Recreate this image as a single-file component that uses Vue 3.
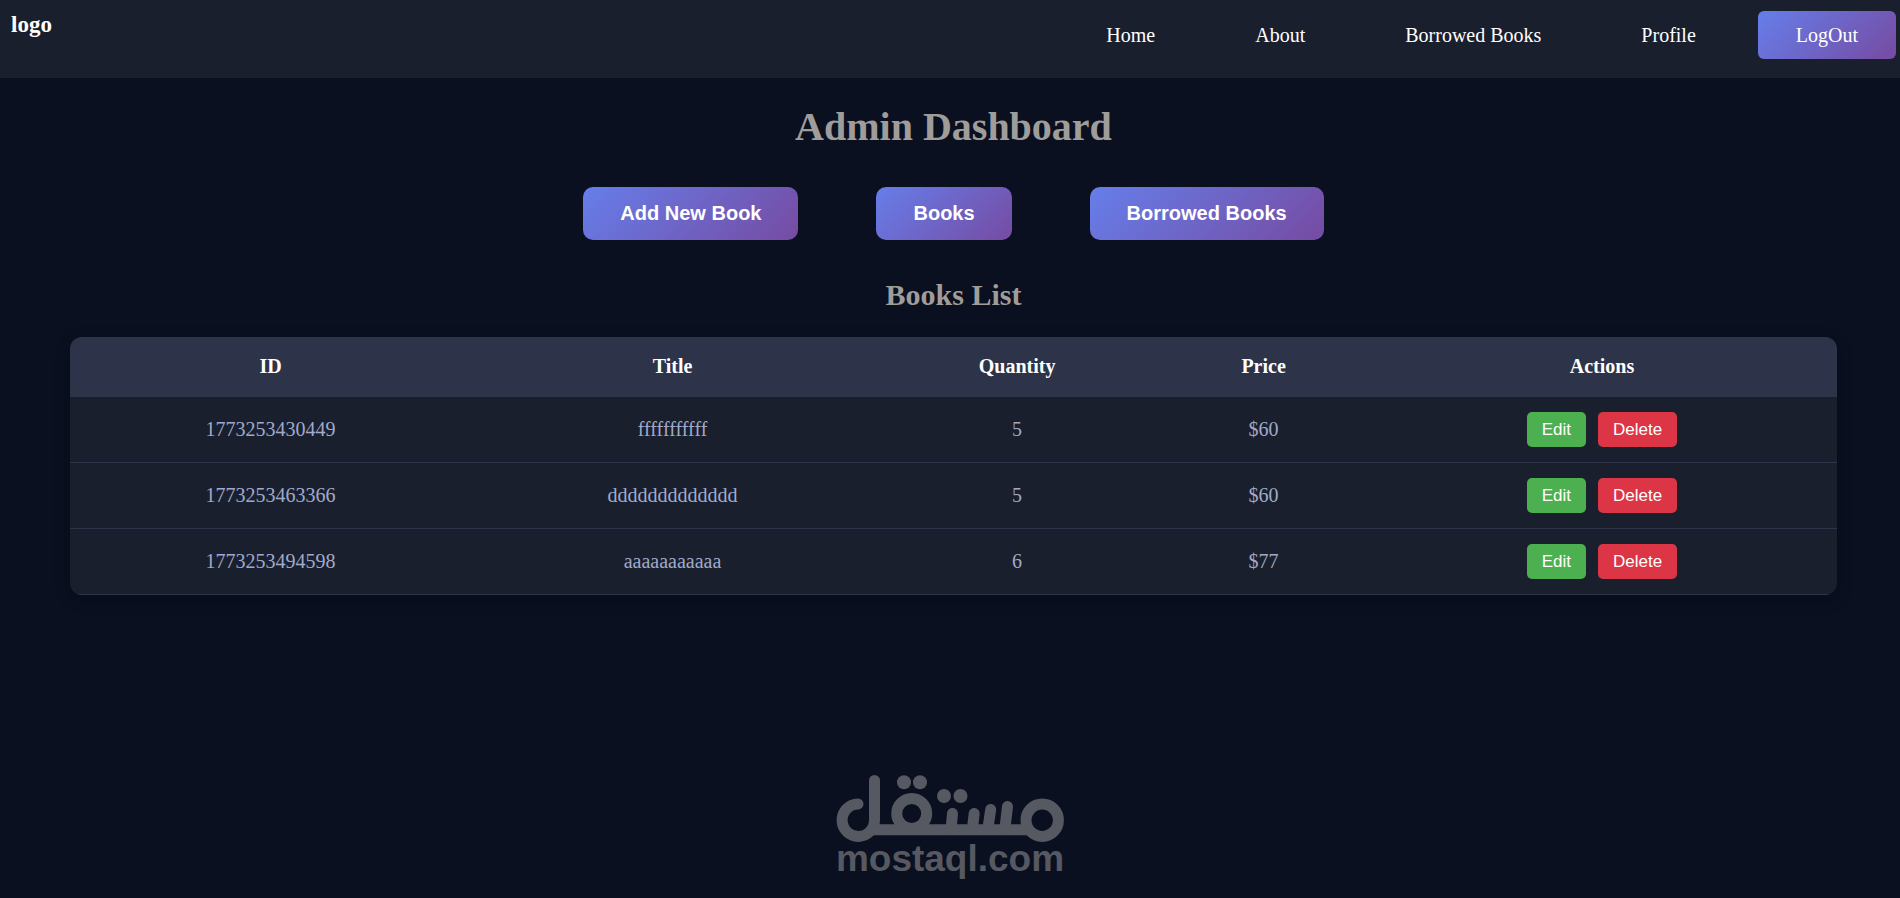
<script setup>
const links = ['Home', 'About', 'Borrowed Books', 'Profile']
const actions = ['Add New Book', 'Books', 'Borrowed Books']
const books = [
  { id: '1773253430449', title: 'fffffffffff', quantity: 5, price: '$60' },
  { id: '1773253463366', title: 'ddddddddddddd', quantity: 5, price: '$60' },
  { id: '1773253494598', title: 'aaaaaaaaaaa', quantity: 6, price: '$77' }
]
</script>

<template>
  <div class="page">
    <header class="navbar">
      <strong class="brand">logo</strong>
      <nav class="nav">
        <a v-for="link in links" :key="link" class="nav-link" href="#">{{ link }}</a>
        <a class="logout" href="#">LogOut</a>
      </nav>
    </header>

    <main class="content">
      <h1>Admin Dashboard</h1>
      <div class="actions">
        <button v-for="action in actions" :key="action" class="primary" type="button">{{ action }}</button>
      </div>
      <h2>Books List</h2>
      <table class="books">
        <colgroup>
          <col class="col-id" />
          <col class="col-title" />
          <col class="col-quantity" />
          <col class="col-price" />
          <col class="col-actions" />
        </colgroup>
        <thead>
          <tr>
            <th scope="col">ID</th>
            <th scope="col">Title</th>
            <th scope="col">Quantity</th>
            <th scope="col">Price</th>
            <th scope="col">Actions</th>
          </tr>
        </thead>
        <tbody>
          <tr v-for="book in books" :key="book.id">
            <td>{{ book.id }}</td>
            <td>{{ book.title }}</td>
            <td>{{ book.quantity }}</td>
            <td>{{ book.price }}</td>
            <td>
              <div class="row-actions">
                <button class="small edit" type="button">Edit</button>
                <button class="small delete" type="button">Delete</button>
              </div>
            </td>
          </tr>
        </tbody>
      </table>
    </main>

    <footer class="mark">
      <svg class="mark-logo" width="228" height="68" viewBox="0 0 228 68" role="img" aria-label="مستقل">
        <g fill="none" stroke="currentColor" stroke-width="11" stroke-linecap="round">
          <path d="M22 29A16.200 16.200 0 1 0 38.500 45V5.500" />
          <path d="M33 54.700H194" stroke-linecap="butt" />
          <circle cx="75.700" cy="38.500" r="15" />
          <circle cx="206.200" cy="45.200" r="16.200" />
          <path d="M115.200 53L116.500 38.500M136.500 53L138.200 38.500M152 53L154.700 34.500M169 53L171.500 31.500" />
        </g>
        <g fill="currentColor">
          <circle cx="68" cy="7.300" r="7" />
          <circle cx="84" cy="7.300" r="7" />
          <circle cx="108" cy="21" r="7" />
          <circle cx="124.500" cy="21" r="7" />
        </g>
      </svg>
      <span class="mark-name">mostaql.com</span>
    </footer>
  </div>
</template>

<style>
body {
  background: #0a1020;
}
</style>

<style scoped>
.page {
  display: flex;
  flex-direction: column;
  min-height: 100vh;
  background: #0a1020;
  font-family: "Liberation Serif", "Times New Roman", serif;
  font-size: 20px;
}

.navbar {
  display: flex;
  justify-content: space-between;
  align-items: flex-start;
  box-sizing: border-box;
  height: 78px;
  padding: 11px 4px 0 11px;
  background: #1a1f2e;
  color: #fff;
}

.brand {
  font-size: 23px;
  line-height: 27px;
}

.nav {
  display: flex;
  align-items: center;
}

.nav-link {
  margin-right: 100px;
  color: #fff;
  line-height: 48px;
  text-decoration: none;
}

.nav-link:nth-last-child(2) {
  margin-right: 62px;
}

.logout {
  padding: 0 38px;
  border-radius: 6px;
  background: linear-gradient(135deg, #667eea 0%, #764ba2 100%);
  color: #fff;
  line-height: 48px;
  text-decoration: none;
}

.content {
  padding: 26px 63px 0 70px;
  text-align: center;
}

h1,
h2 {
  margin: 0;
  color: #a09c9a;
}

h1 {
  font-size: 40px;
  line-height: 46px;
}

h2 {
  margin-bottom: 25px;
  font-size: 30px;
  line-height: 34px;
}

.actions {
  display: flex;
  justify-content: center;
  gap: 78px;
  margin: 37px 0 38px;
}

.primary {
  padding: 15px 37px;
  border: 0;
  border-radius: 10px;
  background: linear-gradient(135deg, #667eea 0%, #764ba2 100%);
  color: #fff;
  font: bold 20px/23px "Liberation Sans", Arial, sans-serif;
}

.books {
  width: 100%;
  border-collapse: collapse;
  border-radius: 12px;
  overflow: hidden;
  background: #1a1f2e;
  box-shadow: 0 4px 15px rgba(0, 0, 0, 0.3);
  table-layout: fixed;
}

.col-id {
  width: 22.7%;
}

.col-title {
  width: 22.8%;
}

.col-quantity {
  width: 16.2%;
}

.col-price {
  width: 11.7%;
}

.col-actions {
  width: 26.6%;
}

th,
td {
  border-bottom: 1px solid #2d3348;
  line-height: 23px;
}

th {
  padding: 18px;
  background: #2d3348;
  color: #fff;
}

td {
  padding: 15px;
  color: #a0aac8;
}

.row-actions {
  display: flex;
  justify-content: center;
  gap: 12px;
}

.small {
  padding: 8px 15px;
  border: 0;
  border-radius: 5px;
  color: #fff;
  font: 17px/19px "Liberation Sans", Arial, sans-serif;
}

.edit {
  background: #4caf50;
}

.delete {
  background: #dc3545;
}

.mark {
  display: flex;
  flex-direction: column;
  align-items: center;
  margin-top: auto;
  padding-bottom: 23px;
  color: #565962;
}

.mark-logo {
  display: block;
}

.mark-name {
  font: bold 37px/32px "Liberation Sans", Arial, sans-serif;
}
</style>
